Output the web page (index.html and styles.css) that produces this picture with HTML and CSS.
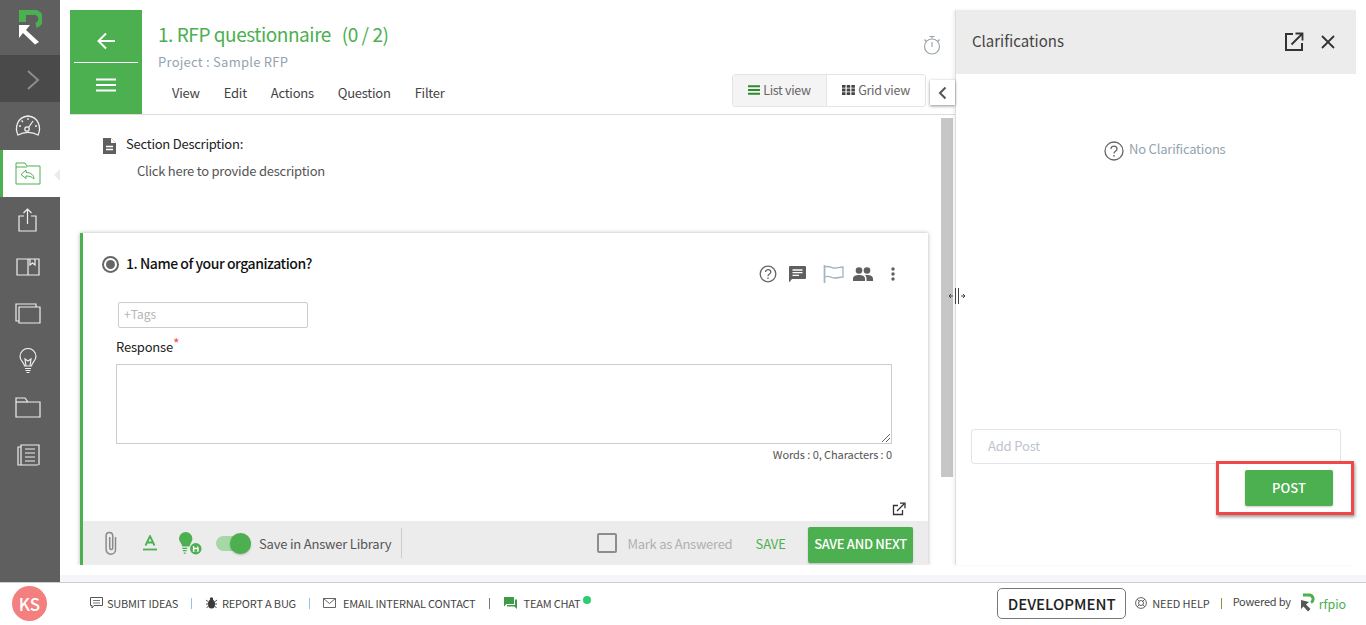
FILE: index.html
```html
<!DOCTYPE html>
<html lang="en">
<head>
<meta charset="utf-8">
<title>RFP questionnaire</title>
<link rel="stylesheet" href="styles.css">
</head>
<body>
<div class="app">
  <div class="workspace">
    <nav class="sidebar">
      <div class="logo">
        <svg width="24" height="36" viewBox="0 0 24 36"><path d="M1 2.500h13a6.800 6.800 0 0 1 4 13" fill="none" stroke="#4caf50" stroke-width="5"/><path d="M1 0h7v12H1z" fill="#4caf50"/><path d="M1 15h11l-4 5 13 12-4 2.500L5 23l-4 5z" fill="#fff"/></svg>
      </div>
      <div class="expand"><svg width="16" height="22" viewBox="0 0 16 22"><path d="M3 2l10 9-10 9" fill="none" stroke="#8d8d8d" stroke-width="2"/></svg></div>
      <div class="nav-item first"><svg width="28" height="24" viewBox="0 0 28 24" fill="none" stroke="#eee" stroke-width="1.300"><path d="M4 21C.500 14 3 3 14 2c11 1 13.500 12 10 19-6-3.500-14-3.500-20 0z"/><circle cx="13" cy="15" r="2.200"/><path d="M14.500 13.500L19 7M5 12h2M21 12h2M14 4v2M7.500 6.500L9 8"/></svg></div>
      <div class="nav-item active"><svg width="26" height="23" viewBox="0 0 26 23" fill="none" stroke="#4caf50" stroke-width="1"><path d="M1 22V1h9l2 3h13v18z"/><path d="M1 5h11"/><path d="M11 8l-5 4.500 5 4v-2.500c4 0 6 1 8 3 0-4-3-6.500-8-6.500z"/></svg></div>
      <div class="nav-item"><svg width="20" height="24" viewBox="0 0 20 24" fill="none" stroke="#eee" stroke-width="1.200"><path d="M6 8H1v15h17V8h-5"/><path d="M9.500 16V1M5.500 5l4-4 4 4"/></svg></div>
      <div class="nav-item"><svg width="24" height="20" viewBox="0 0 24 20" fill="none" stroke="#eee" stroke-width="1.200"><path d="M12 2H1v16h11V2zM12 2h11v16H12"/><path d="M14 2v6l2.500-2 2.500 2V2"/></svg></div>
      <div class="nav-item"><svg width="26" height="21" viewBox="0 0 26 21" fill="none" stroke="#eee" stroke-width="1.200"><path d="M4 18H1V1h20v3"/><path d="M4 4h21v16H4z"/></svg></div>
      <div class="nav-item"><svg width="18" height="26" viewBox="0 0 18 26" fill="none" stroke="#eee" stroke-width="1.200"><path d="M5.500 18c0-3-4.500-5-4.500-9.500a8 8 0 0 1 16 0c0 4.500-4.500 6.500-4.500 9.500z"/><path d="M7 18l-1-7 3 2 3-2-1 7M6 20.500h6M6.500 22.500h5M7.500 24.500h3"/></svg></div>
      <div class="nav-item"><svg width="26" height="21" viewBox="0 0 26 21" fill="none" stroke="#eee" stroke-width="1.200"><path d="M1 20V1h9l3 4h12v15z"/><path d="M1 5h12"/></svg></div>
      <div class="nav-item"><svg width="23" height="22" viewBox="0 0 23 22" fill="none" stroke="#eee" stroke-width="1.200"><path d="M4 3H1v18h20"/><path d="M4 21V1h18v20"/><path d="M8 5h10M8 9h10M8 13h10M8 17h10"/></svg></div>
    </nav>

    <main class="main">
      <section class="editor">
        <header class="topbar">
          <div class="back-block">
            <div class="back-btn"><svg width="20" height="18" viewBox="0 0 20 18"><path d="M10 1.500L2.500 9l7.500 7.500M3 9h16" fill="none" stroke="#fff" stroke-width="2"/></svg></div>
            <div class="menu-btn"><svg width="20" height="14" viewBox="0 0 20 14"><path d="M0 1.500h20M0 7h20M0 12.500h20" stroke="#fff" stroke-width="2"/></svg></div>
          </div>
          <div class="heading">
            <h1 class="title">1. RFP questionnaire <span class="count">(0 / 2)</span></h1>
            <p class="project">Project : Sample RFP</p>
            <div class="menus"><span class="menu">View</span><span class="menu">Edit</span><span class="menu">Actions</span><span class="menu">Question</span><span class="menu">Filter</span></div>
          </div>
          <div class="tools">
            <svg class="timer" width="18" height="20" viewBox="0 0 18 20" fill="none" stroke="#9aa7ab" stroke-width="1.200"><circle cx="9" cy="11.500" r="7.500"/><path d="M6.500 1.500h5M9 1.500v2M1.500 4.500l2 2M16.500 4.500l-2 2M9 7v5"/></svg>
            <div class="views">
              <div class="view selected"><svg width="12" height="10" viewBox="0 0 12 10"><path d="M0 1.200h12M0 5h12M0 8.800h12" stroke="#2e8b2e" stroke-width="2"/></svg>List view</div>
              <div class="view"><svg width="13" height="10" viewBox="0 0 13 10" fill="#444"><path d="M0 0h3.500v2.800H0zM4.700 0h3.500v2.800H4.700zM9.400 0h3.500v2.800H9.400zM0 3.600h3.500v2.800H0zM4.700 3.600h3.500v2.800H4.700zM9.400 3.600h3.500v2.800H9.400zM0 7.200h3.500V10H0zM4.700 7.200h3.500V10H4.700zM9.400 7.200h3.500V10H9.400z"/></svg>Grid view</div>
            </div>
            <button class="collapse"><svg width="9" height="14" viewBox="0 0 9 14"><path d="M7.500 1.500L2 7l5.500 5.500" fill="none" stroke="#555" stroke-width="2"/></svg></button>
          </div>
        </header>
        <div class="scroller">
          <div class="content">
            <div class="section-desc">
              <svg width="14" height="16" viewBox="0 0 14 16"><path d="M1 0h8l5 5v11H1z" fill="#5f5f5f"/><path d="M9 0v5h5z" fill="#fff"/><path d="M4 8.500h7M4 11.500h7" stroke="#fff" stroke-width="1.300"/></svg>
              <div>
                <div class="section-label">Section Description:</div>
                <div class="section-hint">Click here to provide description</div>
              </div>
            </div>
            <article class="card">
              <div class="card-body">
                <div class="q-row">
                  <span class="radio"><span class="radio-dot"></span></span>
                  <h2 class="q-title">1. Name of your organization?</h2>
                  <div class="q-icons">
                    <svg width="18" height="18" viewBox="0 0 18 18" fill="none" stroke="#666" stroke-width="1.300"><circle cx="9" cy="9" r="7.800"/><path d="M6.500 7c0-3.300 5.300-3.300 5.300 0 0 2-2.800 2-2.800 4.200"/><path d="M9 12.500v1.500"/></svg>
                    <svg width="18" height="18" viewBox="0 0 18 18"><path d="M2 1h15a1 1 0 0 1 1 1v11a1 1 0 0 1-1 1H4l-3 3.500V2a1 1 0 0 1 1-1z" fill="#5f5f5f"/><path d="M4.500 5h10M4.500 7.700h10M4.500 10.400h6.500" stroke="#fff" stroke-width="1.300"/></svg>
                    <svg class="flag" width="21" height="18" viewBox="0 0 21 18" fill="none" stroke="#a0b4c1" stroke-width="1.300"><path d="M1.500 0v18" stroke-width="1.700"/><path d="M2 2c5-2 7 2 11 1 3-.5 5-1 7-1v10c-3 0-5 1-8 1-4 0-6-3-10-1"/></svg>
                    <svg width="20" height="14" viewBox="0 0 20 14" fill="#5f5f5f"><circle cx="6" cy="3.500" r="3.300"/><circle cx="14" cy="3.500" r="3.300"/><path d="M0 14v-2.500C0 9 3 8 6 8s6 1 6 3.500V14zM13.500 14v-2.500c0-1.300-.5-2.500-1.500-3.300.7-.1 1.300-.2 2-.2 3 0 6 1 6 3.500V14z"/></svg>
                    <svg class="dots" width="4" height="14" viewBox="0 0 4 14" fill="#5f5f5f"><circle cx="2" cy="2" r="1.700"/><circle cx="2" cy="7" r="1.700"/><circle cx="2" cy="12" r="1.700"/></svg>
                  </div>
                </div>
                <div class="tags">+Tags</div>
                <div class="response-label">Response<sup class="req">*</sup></div>
                <div class="response-box"><svg class="grip" width="9" height="9" viewBox="0 0 9 9"><path d="M9 1L1 9M9 5L5 9" stroke="#666"/></svg></div>
                <div class="counter">Words : 0, Characters : 0</div>
                <div class="open-row"><svg width="14" height="14" viewBox="0 0 14 14" fill="none" stroke="#333" stroke-width="1.300"><path d="M10.500 8v4.500h-9v-9H6"/><path d="M5 9l7-7M8 1.200h5v5" /></svg></div>
              </div>
              <div class="card-foot">
                <svg width="16" height="24" viewBox="0 0 16 24" fill="none" stroke="#8a8a8a" stroke-width="1.500"><path d="M12.500 6v12.500a4.700 4.700 0 0 1-9.400 0V4.800a3.300 3.300 0 0 1 6.600 0V17a1.500 1.500 0 0 1-3 0V6"/></svg>
                <svg class="ic-font" width="14" height="16" viewBox="0 0 14 16"><path d="M2.500 10.500L7 1l4.500 9.500M4 7.500h6" fill="none" stroke="#4caf50" stroke-width="1.800"/><path d="M0 14.500h14" stroke="#4caf50" stroke-width="1.800"/></svg>
                <svg class="ic-bulb" width="23" height="23" viewBox="0 0 24 24"><path d="M7 0a7 7 0 0 1 7 7c0 3-2.500 5-3 8H3.500C3 12 0 10 0 7a7 7 0 0 1 7-7z" fill="#4caf50"/><path d="M3.500 17h5M4 19.500h4M5 22h2" stroke="#4caf50" stroke-width="1.300"/><circle cx="17.500" cy="17.500" r="6" fill="#4caf50"/><path d="M14.500 14.500h4.500l1.500 1.500v4.500h-6z" fill="#fff"/><path d="M16 14.500h3v2h-3zM16 18h3v2.500h-3z" fill="#4caf50"/></svg>
                <span class="switch"><span class="knob"></span></span>
                <span class="lib-label">Save in Answer Library</span>
                <span class="foot-div"></span>
                <span class="foot-space"></span>
                <span class="check"></span>
                <span class="mark">Mark as Answered</span>
                <span class="save">SAVE</span>
                <button class="save-next">SAVE AND NEXT</button>
              </div>
            </article>
          </div>
          <div class="scroll-track"><div class="scroll-thumb"></div></div>
        </div>
      </section>

      <aside class="panel">
        <div class="panel-head">
          <span class="panel-title">Clarifications</span>
          <svg width="20" height="20" viewBox="0 0 20 20" fill="none" stroke="#333" stroke-width="2"><path d="M9 2H2v16h16v-7"/><path d="M7.500 12.500L18 2M11.500 1.500h7v7" stroke-width="1.800"/></svg>
          <svg class="close" width="16" height="16" viewBox="0 0 16 16"><path d="M2 2l12 12M14 2L2 14" stroke="#333" stroke-width="1.800"/></svg>
        </div>
        <div class="panel-empty">
          <svg width="20" height="20" viewBox="0 0 20 20" fill="none" stroke="#666" stroke-width="1.300"><circle cx="10" cy="10" r="9"/><path d="M7 8c0-3.800 6-3.800 6 0 0 2.300-3 2.300-3 4.500"/><path d="M10 14v1.700"/></svg>
          <span>No Clarifications</span>
        </div>
        <div class="add-post">Add Post</div>
        <div class="post-row">
          <div class="highlight"><button class="post">POST</button></div>
        </div>
      </aside>
      <svg class="resize" width="18" height="16" viewBox="0 0 18 16" fill="none" stroke="#444"><path d="M7.500 0v16M10.500 0v16M1 8h4M13 8h4"/><path d="M3 6L1 8l2 2M15 6l2 2-2 2" /></svg>
    </main>
  </div>
  <div class="strip"></div>
  <footer class="footer">
    <span class="avatar">KS</span>
    <div class="links">
      <span class="link tight"><svg width="13" height="12" viewBox="0 0 13 12" fill="none" stroke="#555"><path d="M.5.500h12v8H4L2 11V8.500H.5z"/><path d="M3 3.500h7M3 6h7" stroke-width=".8"/></svg>SUBMIT IDEAS</span>
      <span class="sep blue"></span>
      <span class="link"><svg width="11" height="12" viewBox="0 0 11 12" fill="#3a3a3a"><ellipse cx="5.500" cy="7" rx="3.500" ry="4.500"/><circle cx="5.500" cy="2" r="1.700"/><path d="M0 3l2.500 2M11 3L8.500 5M0 7h2M9 7h2M.5 11L2.500 9M10.500 11l-2-2" stroke="#3a3a3a" stroke-width=".9"/></svg>REPORT A BUG</span>
      <span class="sep blue"></span>
      <span class="link wide"><svg width="13" height="10" viewBox="0 0 13 10" fill="none" stroke="#555" stroke-width=".9"><path d="M.5.500h12v9H.5zM.5.500l6 5 6-5"/></svg>EMAIL INTERNAL CONTACT</span>
      <span class="sep"></span>
      <span class="link wide chat"><svg width="13" height="12" viewBox="0 0 13 12" fill="#3f9b45"><path d="M0 0h10v7H2.500L0 9.500z"/><path d="M11 2.500h2V12l-2.500-2.500H3V8h8z"/></svg>TEAM CHAT<span class="online"></span></span>
    </div>
    <div class="foot-right">
      <span class="env">DEVELOPMENT</span>
      <span class="help"><svg width="12" height="12" viewBox="0 0 12 12" fill="none" stroke="#555" stroke-width=".9"><circle cx="6" cy="6" r="5.400"/><circle cx="6" cy="6" r="2.500"/><path d="M2 2l2.300 2.300M10 2L7.700 4.300M2 10l2.300-2.300M10 10L7.700 7.700"/></svg>NEED HELP</span>
      <span class="sep olive"></span>
      <span class="powered">Powered by</span>
      <svg class="mini-logo" width="14" height="20" viewBox="0 0 14 20"><path d="M2 2h6a4 4 0 0 1 2 7.500" fill="none" stroke="#4caf50" stroke-width="3"/><path d="M0 7v9l2.500-2.500 4.500 5 2.500-2.500-4.500-4.500L8 9z" fill="#555"/></svg>
      <span class="brand">rfpio</span>
    </div>
  </footer>
</div>
</body>
</html>
```
FILE: styles.css
```css
* { box-sizing: border-box; }
html, body { margin: 0; height: 625px; overflow: hidden; }
body { font-family: "Noto Sans CJK SC", "Noto Sans", sans-serif; color: #333; background: #fff; }
button { font-family: inherit; border: 0; padding: 0; }
h1, h2, p { margin: 0; font-weight: 400; }

.app { display: flex; flex-direction: column; height: 625px; }
.workspace { display: flex; height: 565px; }
.strip { height: 17px; background: linear-gradient(#fff 10px, #f5f6fa 10px); }

.sidebar { width: 60px; flex: none; background: #5f5f5f; display: flex; flex-direction: column; margin-bottom: -17px; position: relative; z-index: 2; }
.logo { height: 55px; padding: 10px 0 0 18px; }
.expand { height: 47px; background: #4a4a4a; display: flex; align-items: center; justify-content: center; padding: 2px 0 0 6px; }
.nav-item { height: 47px; display: flex; align-items: center; justify-content: center; padding: 0 4px 2px 0; }
.nav-item.first { height: 48px; padding-bottom: 0; }
.active { background: #fff; border-left: 3px solid #4caf50; position: relative; padding-bottom: 0; }
.active::after { content: ""; position: absolute; right: 0; top: 19px; border: 6px solid transparent; border-right-color: #e6ecf2; }
.active svg { margin-right: 3px; }

.main { flex: 1; display: flex; padding: 10px 10px 0 10px; position: relative; min-width: 0; }
.editor { width: 885px; flex: none; display: flex; flex-direction: column; min-height: 0; }
.topbar { height: 105px; flex: none; display: flex; border-bottom: 1px solid #dcdcdc; }
.back-block { width: 72px; height: 104px; background: #4caf50; flex: none; display: flex; flex-direction: column; padding: 0 4px; }
.back-btn { height: 53px; border-bottom: 1px solid #fff; display: flex; align-items: center; justify-content: center; padding-top: 10px; }
.menu-btn { flex: 1; display: flex; align-items: center; justify-content: center; padding-bottom: 7px; }
.heading { flex: 1; padding: 9px 0 0 16px; }
.title { font-size: 19px; line-height: 30px; color: #4caf50; letter-spacing: -.45px; }
.count { margin-left: 7px; }
.project { margin-top: 3px; font-size: 13px; line-height: 20px; color: #94a3b0; letter-spacing: .25px; }
.menus { display: flex; gap: 24px; margin-top: 11px; padding-left: 14px; font-size: 13px; line-height: 20px; color: #444; letter-spacing: -.25px; }
.tools { width: 223px; flex: none; display: flex; flex-direction: column; align-items: flex-start; position: relative; padding-top: 25px; }
.timer { align-self: flex-end; margin-right: 14px; }
.views { display: flex; height: 33px; margin-top: 19px; width: 194px; border: 1px solid #e4e4e4; border-radius: 3px; font-size: 12.500px; letter-spacing: -.3px; color: #666; }
.view { flex: 1; display: flex; align-items: center; justify-content: center; gap: 3px; padding-bottom: 3px; }
.view svg { margin-top: 2px; }
.view.selected { background: #f4f4f4; border-right: 1px solid #e4e4e4; flex: none; width: 94px; }
.collapse { position: absolute; right: 0; top: 70px; width: 25px; height: 25px; background: #fff; box-shadow: 0 1px 3px rgba(0,0,0,.45); display: flex; align-items: center; justify-content: center; }

.scroller { flex: 1; display: flex; min-height: 0; }
.content { width: 871px; flex: none; padding: 0 0 0 10px; min-height: 0; display: flex; flex-direction: column; overflow: hidden; }
.section-desc { display: flex; gap: 10px; padding: 19px 0 0 22px; height: 118px; flex: none; font-size: 13px; letter-spacing: -.24px; }
.section-desc > svg { margin-top: 4px; }
.section-label { color: #222; line-height: 20px; }
.section-hint { color: #555; margin: 7px 0 0 11px; line-height: 20px; }
.scroll-track { width: 14px; flex: none; padding: 3px 2px 88px 0; }
.scroll-thumb { height: 100%; width: 12px; background: #c6c6c6; }

.card { width: 848px; flex: 1; border-left: 3px solid #4caf50; box-shadow: 0 0 4px rgba(0,0,0,.3); display: flex; flex-direction: column; min-height: 0; }
.card-body { flex: 1; padding: 20px 0 0 33px; position: relative; display: flex; flex-direction: column; }
.q-row { display: flex; align-items: flex-start; margin-left: -14px; height: 49px; }
.radio { width: 17px; height: 17px; border: 2px solid #666; border-radius: 50%; display: flex; align-items: center; justify-content: center; margin-top: 3px; }
.radio-dot { width: 9px; height: 9px; background: #666; border-radius: 50%; }
.q-title { font-size: 14px; line-height: 22px; color: #111; margin: -1px 0 0 7px; font-weight: 500; letter-spacing: -.45px; }
.q-icons { margin-left: auto; margin-right: 33px; display: flex; align-items: center; gap: 11px; margin-top: 12px; height: 18px; }
.flag { margin: 0 -2px 0 6px; }
.dots { margin-left: 7px; }
.tags { width: 190px; height: 26px; border: 1px solid #ccc; border-radius: 2px; margin-left: 2px; padding-left: 5px; font-size: 12px; line-height: 22px; color: #b5b5b5; flex: none; }
.response-label { margin-top: 8px; height: 28px; font-size: 13px; letter-spacing: -.2px; line-height: 22px; color: #222; flex: none; }
.req { color: #f05050; font-size: 14px; line-height: 0; vertical-align: 3px; }
.response-box { width: 776px; height: 80px; border: 1px solid #ccc; position: relative; flex: none; }
.grip { position: absolute; right: 1px; bottom: 1px; }
.counter { width: 776px; text-align: right; font-size: 11px; line-height: 18px; margin-top: 1px; color: #555; letter-spacing: -.08px; }
.open-row { position: absolute; right: 22px; top: 269px; line-height: 0; }

.card-foot { height: 44px; flex: none; background: #ececec; display: flex; align-items: center; padding: 0 15px 0 20px; }
.ic-font { margin-left: 24px; }
.ic-bulb { margin-left: 22px; }
.switch { width: 35px; height: 15px; border-radius: 8px; background: #a5d7a7; margin-left: 14px; position: relative; }
.knob { position: absolute; right: 0; top: -3px; width: 21px; height: 21px; border-radius: 50%; background: #4caf50; box-shadow: 0 1px 2px rgba(0,0,0,.25); }
.lib-label { margin-left: 8px; font-size: 13px; color: #555; letter-spacing: -.2px; }
.foot-div { width: 1px; height: 30px; background: #ccc; margin-left: 10px; }
.foot-space { flex: 1; }
.check { width: 20px; height: 20px; border: 2px solid #8d8d8d; border-radius: 2px; }
.mark { margin-left: 10px; font-size: 13px; color: #b0b0b0; letter-spacing: -.25px; }
.save { margin-left: 23px; font-size: 13px; color: #4caf50; }
.save-next { margin: 4px 0 0 22px; width: 105px; height: 36px; padding-bottom: 3px; background: #4caf50; color: #fff; font-size: 13px; font-weight: 500; letter-spacing: -.3px; border-radius: 2px; box-shadow: 0 1px 2px rgba(0,0,0,.2); }

.panel { width: 401px; flex: none; display: flex; flex-direction: column; border-left: 1px solid #ddd; box-shadow: -2px 0 3px rgba(0,0,0,.06); }
.panel-head { height: 64px; flex: none; background: #ececec; display: flex; align-items: center; padding: 0 20px 0 16px; }
.panel-title { flex: 1; font-size: 15px; color: #444; padding-bottom: 4px; }
.close { margin-left: 16px; }
.panel-empty { display: flex; gap: 5px; padding: 65px 0 0 148px; font-size: 13px; color: #94a3b0; height: 355px; align-items: flex-start; letter-spacing: -.2px; }
.panel-empty svg { margin-top: 2px; }
.panel-empty span { line-height: 20px; }
.add-post { margin: 0 15px; height: 35px; flex: none; border: 1px solid #dfe5e8; border-radius: 3px; padding-left: 16px; line-height: 32px; font-size: 13px; color: #c0c4ce; letter-spacing: -.17px; }
.post-row { display: flex; justify-content: flex-end; padding-right: 2px; margin-top: -3px; }
.highlight { width: 138px; height: 54px; border: 3px solid #f04747; box-shadow: 1px 2px 3px rgba(0,0,0,.4); display: flex; align-items: flex-start; justify-content: flex-end; padding: 6px 18px 0 0; }
.post { width: 88px; height: 36px; padding-bottom: 2px; background: #4caf50; color: #fff; font-size: 13px; font-weight: 500; border-radius: 2px; box-shadow: 0 1px 2px rgba(0,0,0,.2); }
.resize { position: absolute; left: 888px; top: 288px; }

.footer { height: 43px; flex: none; border-top: 1px solid #ccc; background: #fff; display: flex; align-items: center; padding: 0 0 2px 12px; position: relative; z-index: 3; }
.avatar { width: 35px; height: 35px; border-radius: 50%; background: #f47f7f; color: #fff; font-size: 17px; font-weight: 500; display: flex; align-items: center; justify-content: center; flex: none; }
.links { display: flex; align-items: center; margin-left: 43px; font-size: 11px; letter-spacing: -.2px; color: #444; }
.link { display: flex; align-items: center; gap: 5px; position: relative; }
.link.tight { gap: 4px; }
.link.wide { gap: 7px; margin-left: -1px; }
.link.chat { margin-left: 0; }
.sep { width: 1px; height: 11px; background: #777; margin: 0 14px 0 13px; }
.sep.blue { background: #8fc4e8; }
.sep.olive { background: #7f9a3f; }
.online { position: absolute; right: -11px; top: 1px; width: 8px; height: 8px; border-radius: 50%; background: #2ecc71; }
.foot-right { margin-left: auto; display: flex; align-items: center; padding-right: 20px; font-size: 11px; letter-spacing: -.1px; color: #444; }
.env { width: 129px; height: 31px; border: 1px solid #777; border-radius: 5px; font-size: 15px; font-weight: 500; color: #222; display: flex; align-items: center; justify-content: center; letter-spacing: 0; }
.help { display: flex; align-items: center; gap: 5px; margin-left: 9px; }
.foot-right .sep { margin: 0 11px; }
.powered { font-size: 11px; letter-spacing: -.2px; position: relative; top: -2px; }
.mini-logo { margin-left: 10px; }
.brand { margin-left: 4px; font-size: 12.500px; color: #4caf50; }
```
